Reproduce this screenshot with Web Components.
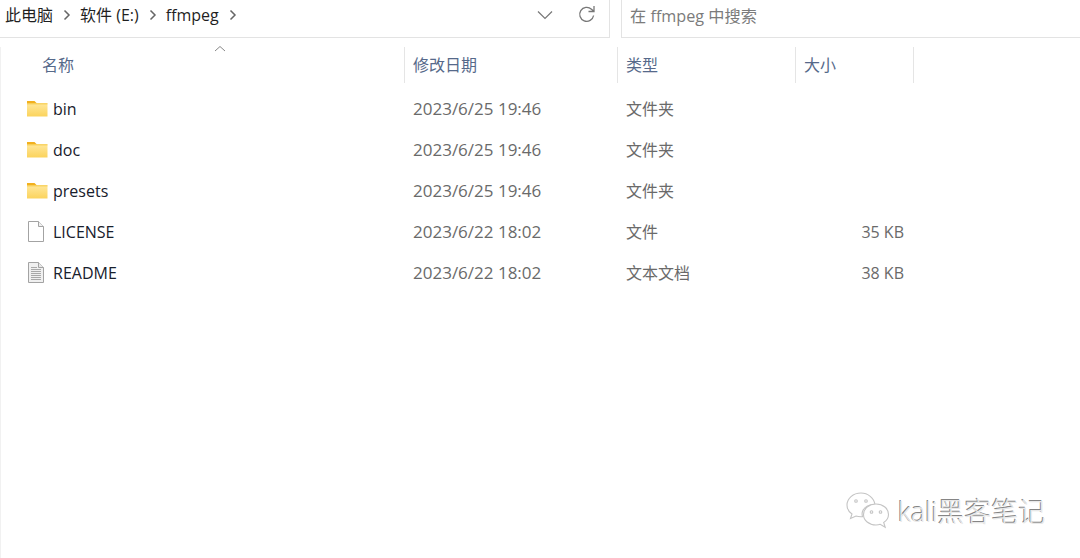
<!DOCTYPE html>
<html>
<head>
<meta charset="utf-8">
<style>
html,body{margin:0;background:#fff;overflow:hidden}
body{width:1080px;height:558px;position:relative;font:16px "Open Sans","Noto Sans CJK SC",sans-serif}
</style>
</head>
<body>
<fm-toolbar></fm-toolbar>
<fm-header></fm-header>
<fm-list>
  <fm-row icon="folder" name="bin" date="2023/6/25 19:46" type="文件夹"></fm-row>
  <fm-row icon="folder" name="doc" date="2023/6/25 19:46" type="文件夹"></fm-row>
  <fm-row icon="folder" name="presets" date="2023/6/25 19:46" type="文件夹"></fm-row>
  <fm-row icon="file" name="LICENSE" date="2023/6/22 18:02" type="文件" size="35 KB"></fm-row>
  <fm-row icon="text" name="README" date="2023/6/22 18:02" type="文本文档" size="38 KB"></fm-row>
</fm-list>
<fm-edge></fm-edge>
<fm-watermark></fm-watermark>
<script>
const FONT = `"Open Sans","Noto Sans CJK SC",sans-serif`

const ICONS = {
    folder: `<svg width="21" height="17" viewBox="0 0 21 17">
        <defs><linearGradient id="g" x1="0" y1="0" x2="0" y2="1"><stop offset="0" stop-color="#ffe79a"/><stop offset="1" stop-color="#fbd35c"/></linearGradient></defs>
        <path d="M0 1h7.500l2.500 2.500H0z" fill="#f2b01e"/>
        <path d="M0 3.500h20.500V16.500H0z" fill="url(#g)"/>
        <path d="M0 3.800h20.500" stroke="#f5c63e" stroke-width="1"/>
    </svg>`,
    file: `<svg width="18" height="21" viewBox="0 0 18 21">
        <path d="M1.500.5h10l5 5v15h-15z" fill="#fff" stroke="#a3a3a3"/>
        <path d="M11.500.5v5h5" fill="#f1f1f1" stroke="#a3a3a3"/>
    </svg>`,
    text: `<svg width="18" height="21" viewBox="0 0 18 21">
        <path d="M1.500.5h10l5 5v15h-15z" fill="#f0f0f0" stroke="#a3a3a3"/>
        <path d="M11.500.5v5h5" fill="#e8e8e8" stroke="#a3a3a3"/>
        <path d="M4 5.500h6M4 7.500h10M4 9.500h10M4 11.500h10M4 13.500h10M4 15.500h10M4 17.500h10" stroke="#a9a9a9"/>
    </svg>`
}

const CHEV = `<svg class="c" width="8" height="12" viewBox="0 0 8 12"><path d="M1.500 1.500 6 6l-4.500 4.500" fill="none" stroke="#666" stroke-width="1.500"/></svg>`

class Toolbar extends HTMLElement{
    connectedCallback(){
        this.attachShadow({mode:'open'}).innerHTML = `
        <style>
        :host{display:flex;height:38px;box-sizing:border-box;font-family:${FONT};font-size:16px;color:#1f1f1f}
        #addr{width:610px;box-sizing:border-box;display:flex;align-items:center;padding:0 0 7px 5px;border:solid #e3e3e3;border-width:0 1px 1px 0}
        #addr span{line-height:22px}
        .c{margin:0 9px 0 10px}
        #drop{margin-left:auto;margin-right:24px}
        #refresh{margin-right:12px}
        #search{flex:1;margin-left:11px;box-sizing:border-box;display:flex;align-items:center;padding:0 0 7px 8px;border:solid #e3e3e3;border-width:0 0 1px 1px;color:#7b7b7b;font-size:16.200px}
        </style>
        <div id="addr">
            <span>此电脑</span>${CHEV}
            <span>软件 (E:)</span>${CHEV}
            <span>ffmpeg</span>${CHEV}
            <svg id="drop" width="16" height="10" viewBox="0 0 16 10"><path d="M1 1.500 8 8.500l7-7" fill="none" stroke="#777" stroke-width="1.200"/></svg>
            <svg id="refresh" width="20" height="20" viewBox="0 0 20 20"><path d="M16.600 10.500A7 7 0 1 1 14.500 4.200L16.800 6.300M17 1v5.500h-5.500" fill="none" stroke="#777" stroke-width="1.300"/></svg>
        </div>
        <div id="search">在 ffmpeg 中搜索</div>
        `
    }
}

class Header extends HTMLElement{
    connectedCallback(){
        this.attachShadow({mode:'open'}).innerHTML = `
        <style>
        :host{display:grid;grid-template-columns:405px 213px 178px 118px 1px;height:36px;margin-top:9px;position:relative;font-family:${FONT};font-size:16px;color:#56698a}
        div{border-right:1px solid #e5e5e5;box-sizing:border-box;padding-left:8px;padding-top:1px;line-height:35px}
        #n{padding-left:42px}
        #sort{position:absolute;left:214px;top:-2px}
        </style>
        <div id="n">名称</div><div>修改日期</div><div>类型</div><div>大小</div><i></i>
        <svg id="sort" width="12" height="7" viewBox="0 0 12 7"><path d="M1 6 6 1.500 11 6" fill="none" stroke="#888" stroke-width="1"/></svg>
        `
    }
}

class List extends HTMLElement{
    connectedCallback(){
        this.attachShadow({mode:'open'}).innerHTML = `
        <style>:host{display:flex;flex-direction:column;margin-top:5px}</style>
        <slot></slot>
        `
    }
}

class Row extends HTMLElement{
    connectedCallback(){
        const a = n => this.getAttribute(n) || ''
        this.attachShadow({mode:'open'}).innerHTML = `
        <style>
        :host{display:grid;grid-template-columns:405px 213px 177px 119px;height:41px;align-items:center;font-family:${FONT};font-size:16px;color:#6a6a6a}
        #name{display:flex;align-items:center;color:#18202c}
        #ic{width:22px;height:21px;margin:0 4px 0 27px;display:flex;align-items:center}
        #date{padding-left:8px;font-size:17px}
        #type{padding:0 0 2px 8px}
        #size{text-align:right;padding-right:10px}
        </style>
        <div id="name"><span id="ic">${ICONS[a('icon')]}</span><span>${a('name')}</span></div>
        <div id="date">${a('date')}</div>
        <div id="type">${a('type')}</div>
        <div id="size">${a('size')}</div>
        `
    }
}

class Edge extends HTMLElement{
    connectedCallback(){
        this.attachShadow({mode:'open'}).innerHTML = `<style>:host{position:absolute;left:0;top:47px;bottom:0;width:1px;background:#f1f1f1}</style>`
    }
}

class Watermark extends HTMLElement{
    connectedCallback(){
        this.attachShadow({mode:'open'}).innerHTML = `
        <style>
        :host{position:absolute;left:846px;top:491px;display:flex;align-items:center;font-family:${FONT};font-size:27px;font-weight:300;color:#e8e8e8;text-shadow:-1px -1px 0 #858585}
        svg{margin-right:8px}
        </style>
        <svg width="44" height="38" viewBox="0 0 44 38" fill="#fff" stroke="#c4c4c4" stroke-width="1.100">
            <path d="M15 1C7 1 1 6.500 1 13c0 3.800 2 7 5 9l-1.500 4.500L10 24c1.500.5 3 .7 5 .7.500 0 1 0 1.500-.1C16 23 16 21 16.500 19.500 18 15 23 12 29 12.500 28 6 22 1 15 1z"/>
            <path d="M30 12c-7 0-12.500 4.500-12.500 10.500S23 33 30 33c1.500 0 3-.2 4.200-.7l5 3-1.500-4.800c3-2 4.800-5 4.800-8C42.500 16.500 37 12 30 12z"/>
            <circle cx="10" cy="9" r="1.300"/><circle cx="20" cy="9" r="1.300"/><circle cx="25.500" cy="20" r="1.300"/><circle cx="34.500" cy="20" r="1.300"/>
        </svg>
        <span>kali黑客笔记</span>
        `
    }
}

customElements.define('fm-toolbar', Toolbar)
customElements.define('fm-header', Header)
customElements.define('fm-list', List)
customElements.define('fm-row', Row)
customElements.define('fm-edge', Edge)
customElements.define('fm-watermark', Watermark)
</script>
</body>
</html>
